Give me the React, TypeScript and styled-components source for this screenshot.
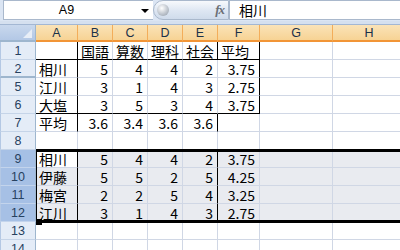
import styled, { createGlobalStyle } from 'styled-components';

const GlobalStyle = createGlobalStyle`
    body {
        margin: 0;
        background: #ffffff;
        overflow: hidden;
        font-family: 'Liberation Sans', 'Noto Sans CJK JP', sans-serif;
    }
`

const COLS = [42, 35, 35, 35, 35, 42, 73, 73];
const LETTERS = ['A', 'B', 'C', 'D', 'E', 'F', 'G', 'H'];
const GRID = '#d0d7e5';
const CELL_FONT = `'Liberation Sans Narrow', 'Noto Sans CJK JP', sans-serif`;

const Window = styled.div`
    width: 400px;
    height: 250px;
    overflow: hidden;
    background: #ffffff;
`

const FormulaBar = styled.div`
    display: flex;
    height: 21px;
    padding-left: 3px;
    background: #dbe5f3;
    box-sizing: border-box;
`

const NameBox = styled.div`
    display: flex;
    width: 150px;
    height: 20px;
    box-sizing: border-box;
    background: #ffffff;
    border: 1px solid #a9b8cc;
    border-right: none;

    .name {
        flex: 1;
        display: flex;
        align-items: center;
        justify-content: center;
        padding-right: 8px;
        font-size: 12.5px;
        color: #000000;
    }

    .arrow {
        width: 16px;
        display: flex;
        align-items: center;
        justify-content: center;

        span {
            width: 0;
            height: 0;
            margin-top: 2px;
            border-left: 4px solid transparent;
            border-right: 4px solid transparent;
            border-top: 4px solid #000000;
        }
    }
`

const FxPill = styled.div`
    display: flex;
    align-items: center;
    justify-content: space-between;
    width: 76px;
    height: 20px;
    box-sizing: border-box;
    padding: 0 4px 0 3px;
    border: 1px solid #a9b8cc;
    border-radius: 10px 0 0 10px;
    background: linear-gradient(#f7f9fc, #dde6f2 55%, #cfdbeb);

    .knob {
        width: 12px;
        height: 12px;
        border-radius: 50%;
        background: radial-gradient(circle at 40% 35%, #ffffff, #b9c0c9 60%, #8d96a2);
    }

    .fx {
        font-family: 'Liberation Serif', serif;
        font-style: italic;
        font-weight: bold;
        font-size: 13px;
        letter-spacing: -1px;
        color: #6b6f76;
    }
`

const FormulaInput = styled.div`
    flex: 1;
    height: 20px;
    box-sizing: border-box;
    display: flex;
    align-items: center;
    padding-left: 9px;
    background: #ffffff;
    border: 1px solid #a9b8cc;
    border-right: none;
    font-family: 'Noto Sans CJK JP', sans-serif;
    font-size: 14px;
    line-height: 16px;
    color: #000000;
`

const Band = styled.div`
    height: 4px;
    box-sizing: border-box;
    background: #d5e0ef;
    border-bottom: 1px solid #a3b7d3;
`

const Sheet = styled.div`
    width: 400px;
    overflow: hidden;
`

const Row = styled.div<{ $h?: number }>`
    display: flex;
    height: ${p => p.$h ?? 18}px;
    width: max-content;
`

const Corner = styled.div`
    position: relative;
    flex: none;
    width: 36px;
    box-sizing: border-box;
    background: linear-gradient(#c9d8ed, #b3c8e6);
    border-right: 1px solid #9eb6ce;
    border-bottom: 2px solid #9eb6ce;

    &::after {
        content: '';
        position: absolute;
        right: 3px;
        bottom: 2px;
        width: 0;
        height: 0;
        border-left: 9px solid transparent;
        border-bottom: 9px solid #e8eef7;
    }
`

const ColHead = styled.div<{ $w: number }>`
    flex: none;
    width: ${p => p.$w}px;
    box-sizing: border-box;
    display: flex;
    align-items: center;
    justify-content: center;
    padding-top: 1px;
    background: linear-gradient(#fae3b8, #f7d394);
    border-right: 1px solid #f3ad5a;
    border-bottom: 2px solid #f29536;
    font-size: 12.5px;
    line-height: 14px;
    color: #1b3149;
    overflow: hidden;
`

const RowHead = styled.div<{ $sel?: boolean; $hidden?: boolean }>`
    flex: none;
    width: 36px;
    box-sizing: border-box;
    display: flex;
    align-items: center;
    justify-content: center;
    padding-top: 1px;
    background: ${p => (p.$sel ? '#a6c0e5' : '#e4ecf7')};
    border-left: 1px solid #b4c8e4;
    border-right: 1px solid #9eb6ce;
    border-bottom: ${p => (p.$hidden ? '2px solid #9eb6ce' : `1px solid ${p.$sel ? '#c3d4ec' : '#c5d4e8'}`)};
    font-size: 12.5px;
    line-height: 14px;
    color: #27415f;
    overflow: hidden;
`

const Cell = styled.div<{ $w: number; $num?: boolean; $r?: boolean; $b?: boolean; $fill?: string }>`
    flex: none;
    width: ${p => p.$w}px;
    box-sizing: border-box;
    display: flex;
    align-items: flex-end;
    justify-content: ${p => (p.$num ? 'flex-end' : 'flex-start')};
    padding: 0 4px 0 3px;
    background: ${p => p.$fill ?? '#ffffff'};
    border-right: 1px solid ${p => (p.$r ? '#000000' : GRID)};
    border-bottom: 1px solid ${p => (p.$b ? '#000000' : GRID)};
    font-family: ${CELL_FONT};
    font-size: 14px;
    line-height: 16px;
    color: #000000;
    white-space: nowrap;
    overflow: hidden;
`

const Selection = styled.div`
    position: relative;

    &::after {
        content: '';
        position: absolute;
        left: 36px;
        right: 0;
        top: -1px;
        bottom: -1px;
        border-top: 3px solid #000000;
        border-bottom: 3px solid #000000;
        border-left: 1px solid #000000;
        pointer-events: none;
    }

    &::before {
        content: '';
        position: absolute;
        left: 36px;
        bottom: -3px;
        width: 6px;
        height: 6px;
        background: #000000;
        z-index: 2;
    }
`

type Value = string | number;

const TOP_ROWS: { n: string; cells: Value[] }[] = [
    { n: '1', cells: ['', '国語', '算数', '理科', '社会', '平均'] },
    { n: '2', cells: ['相川', 5, 4, 4, 2, '3.75'] },
    { n: '5', cells: ['江川', 3, 1, 4, 3, '2.75'] },
    { n: '6', cells: ['大塩', 3, 5, 3, 4, '3.75'] },
    { n: '7', cells: ['平均', '3.6', '3.4', '3.6', '3.6', ''] },
    { n: '8', cells: [] },
];

const SEL_ROWS: { n: string; cells: Value[] }[] = [
    { n: '9', cells: ['相川', 5, 4, 4, 2, '3.75'] },
    { n: '10', cells: ['伊藤', 5, 5, 2, 5, '4.25'] },
    { n: '11', cells: ['梅宮', 2, 2, 5, 4, '3.25'] },
    { n: '12', cells: ['江川', 3, 1, 4, 3, '2.75'] },
];

const BOTTOM_ROWS = ['13', '14'];

function blackRight(n: string, c: number) {
    const r = Number(n);
    if (c === 0) return r <= 7 || (r >= 9 && r <= 12);
    if (c === 4) return r === 1 || r === 7 || (r >= 9 && r <= 12);
    if (c === 5) return r >= 1 && r <= 6;
    return false;
}

function blackBottom(n: string, c: number) {
    return (n === '1' || n === '6') && c <= 5;
}

function isNum(v: Value) {
    return typeof v === 'number' || /^[0-9.]+$/.test(v);
}

function SheetRow({ n, cells, selected }: { n: string; cells: Value[]; selected?: boolean }) {
    return (
        <Row>
            <RowHead $sel={selected} $hidden={n === '2'}>{n}</RowHead>
            {COLS.map((w, c) => {
                const v = cells[c] ?? '';
                const active = selected && n === '9' && c === 0;
                return (
                    <Cell
                        key={c}
                        $w={w}
                        $num={isNum(v)}
                        $r={blackRight(n, c)}
                        $b={blackBottom(n, c)}
                        $fill={selected && !active ? '#e9ebf0' : '#ffffff'}
                    >
                        {v}
                    </Cell>
                );
            })}
        </Row>
    );
}

export default function App() {
    return (
        <Window>
            <GlobalStyle />
            <FormulaBar>
                <NameBox>
                    <div className="name">A9</div>
                    <div className="arrow"><span /></div>
                </NameBox>
                <FxPill>
                    <div className="knob" />
                    <div className="fx">fx</div>
                </FxPill>
                <FormulaInput>相川</FormulaInput>
            </FormulaBar>
            <Band />
            <Sheet>
                <Row $h={17}>
                    <Corner />
                    {COLS.map((w, i) => (
                        <ColHead key={LETTERS[i]} $w={w}>{LETTERS[i]}</ColHead>
                    ))}
                </Row>
                {TOP_ROWS.map(r => (
                    <SheetRow key={r.n} n={r.n} cells={r.cells} />
                ))}
                <Selection>
                    {SEL_ROWS.map(r => (
                        <SheetRow key={r.n} n={r.n} cells={r.cells} selected />
                    ))}
                </Selection>
                {BOTTOM_ROWS.map(n => (
                    <SheetRow key={n} n={n} cells={[]} />
                ))}
            </Sheet>
        </Window>
    );
}
